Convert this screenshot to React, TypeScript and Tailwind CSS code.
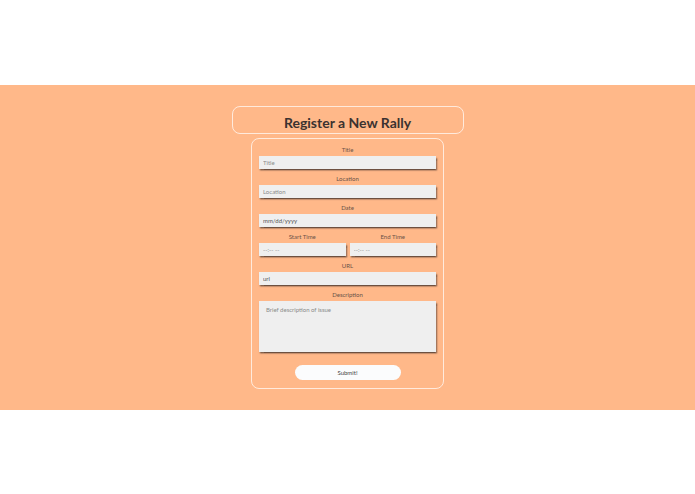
export default function App() {
  return (
    <div className="min-h-[494px] bg-white pt-[85px] font-['Lato','Open_Sans',sans-serif]">
      <section className="flex h-[325px] flex-col items-center bg-[#ffb889] pt-[21px]">
        <div className="flex h-[28px] w-[232px] items-center justify-center rounded-[8px] border-[1.5px] border-white/70">
          <h1 className="pt-[5px] text-[14px] font-bold leading-none text-[#3b3230]">
            Register a New Rally
          </h1>
        </div>

        <form className="mt-[4px] flex h-[251px] w-[193px] flex-col gap-[6px] rounded-[8px] border-[1.5px] border-white/70 px-[7px] pt-[7px]">
          <Field label="Title" placeholder="Title" />
          <Field label="Location" placeholder="Location" />
          <Field label="Date" placeholder="mm/dd/yyyy" dark />

          <div className="flex gap-[4px]">
            <div className="flex flex-1 flex-col">
              <Label text="Start Time" />
              <Input placeholder="--:-- --" />
            </div>
            <div className="flex flex-1 flex-col">
              <Label text="End Time" />
              <Input placeholder="--:-- --" />
            </div>
          </div>

          <Field label="URL" placeholder="url" dark />

          <div className="flex flex-col">
            <Label text="Description" />
            <textarea
              placeholder="Brief description of issue"
              className="mt-[2px] h-[51px] w-full resize-none bg-[#efefef] px-[7px] py-[5px] text-[6px] leading-[8px] text-[#555] shadow-[1px_1.5px_1.5px_rgba(60,45,40,0.75)] outline-none placeholder:text-[#8a8a8a]"
            />
          </div>

          <div className="mt-[7px] flex justify-center">
            <button
              type="button"
              className="h-[15px] w-[106px] rounded-full bg-[#fbfcfd] text-[6px] leading-none text-[#3f3f3f]"
            >
              Submit!
            </button>
          </div>
        </form>
      </section>
    </div>
  );
}

function Label({ text }: { text: string }) {
  return (
    <label className="block h-[8px] text-center text-[6px] font-normal leading-[8px] text-[#6a5248]">
      {text}
    </label>
  );
}

function Input({ placeholder, dark }: { placeholder: string; dark?: boolean }) {
  return (
    <input
      type="text"
      placeholder={placeholder}
      className={
        dark
          ? "mt-[2px] h-[13px] w-full bg-[#efefef] px-[4px] text-[6px] text-[#555] shadow-[1px_1.5px_1.5px_rgba(60,45,40,0.75)] outline-none placeholder:text-[#555]"
          : "mt-[2px] h-[13px] w-full bg-[#efefef] px-[4px] text-[6px] text-[#555] shadow-[1px_1.5px_1.5px_rgba(60,45,40,0.75)] outline-none placeholder:text-[#8a8a8a]"
      }
    />
  );
}

function Field({ label, placeholder, dark }: { label: string; placeholder: string; dark?: boolean }) {
  return (
    <div className="flex flex-col">
      <Label text={label} />
      <Input placeholder={placeholder} dark={dark} />
    </div>
  );
}
